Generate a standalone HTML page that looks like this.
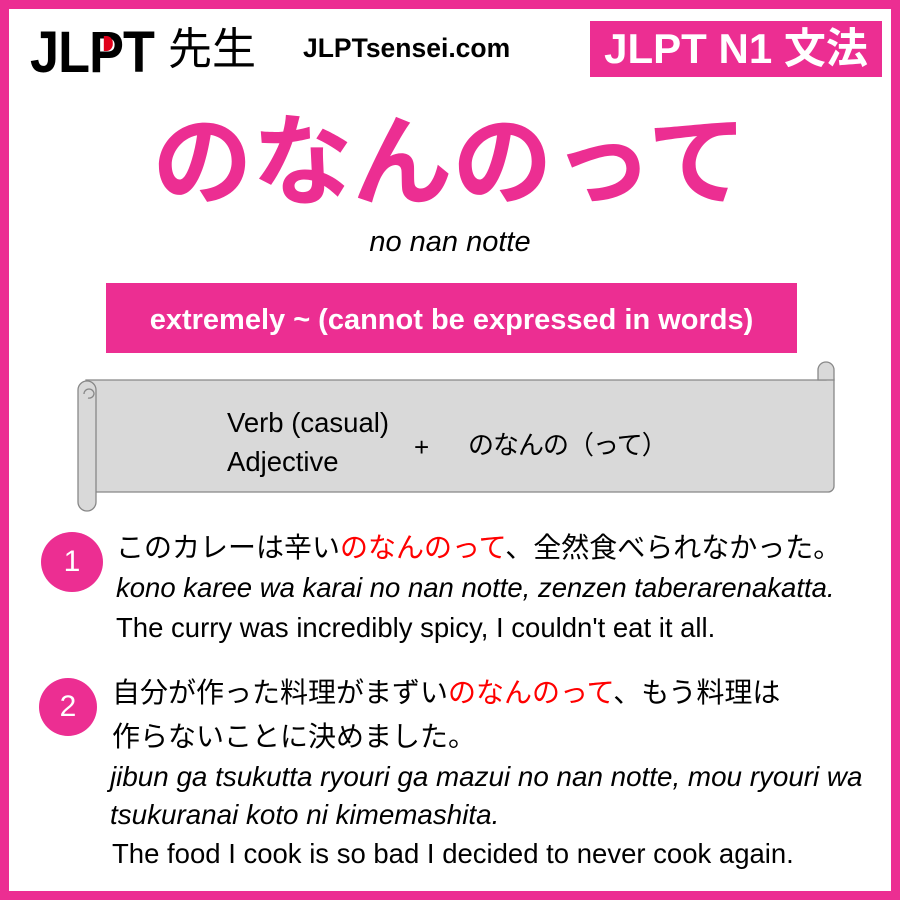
<!DOCTYPE html>
<html><head><meta charset="utf-8"><style>
*{margin:0;padding:0}
body{width:900px;height:900px;background:#ec2e92;position:relative;overflow:hidden;font-family:"Liberation Sans","Noto Sans CJK JP",sans-serif}
.in{position:absolute;left:9px;top:9px;width:882px;height:882px;background:#fff}
.a{position:absolute;white-space:nowrap}
.jp{font-family:"Liberation Sans","Noto Sans CJK JP",sans-serif}
.c{position:absolute;border-radius:50%;background:#ec2e92;color:#fff;text-align:center;font-size:30px}
.r{color:#f00}
</style></head><body>
<div class="in"></div>
<div class="a" style="left:30px;top:22px;font-size:58px;font-weight:bold;letter-spacing:-1px;line-height:62px;transform:scaleX(0.9);transform-origin:left">JL<span style="position:relative">P<span style="position:absolute;left:16px;top:16px;width:10px;height:15px;background:#e0001a;border-radius:0 7px 7px 0"></span></span>T</div>
<div class="a jp" style="left:168px;top:24px;font-size:44px;line-height:52px">先生</div>
<div class="a" style="left:303px;top:33px;font-size:26.5px;font-weight:bold;line-height:30px">JLPTsensei.com</div>
<div class="a jp" style="left:590px;top:21px;width:292px;height:56px;background:#ec2e92;color:#fff;font-size:42px;font-weight:bold;line-height:56px;text-align:center">JLPT N1 文法</div>
<div class="a jp" style="left:0;width:900px;top:105px;text-align:center;color:#ec2e92;font-size:100px;font-weight:bold;line-height:116px">のなんのって</div>
<div class="a" style="left:0;width:900px;top:226px;text-align:center;font-size:29px;font-style:italic;line-height:32px">no nan notte</div>
<div class="a" style="left:106px;top:283px;width:691px;height:70px;background:#ec2e92;color:#fff;font-size:29px;font-weight:bold;line-height:74px;text-align:center">extremely ~ (cannot be expressed in words)</div>
<svg class="a" style="left:0;top:0" width="900" height="900">
<path d="M86 380 H826 V372 a8 8 0 0 1 8 8 V486 a6 6 0 0 1 -6 6 H95 Z" fill="#d9d9d9" stroke="#888" stroke-width="1.3"/>
<path d="M818 380 V370 a8 8 0 0 1 16 0 V380 Z" fill="#d9d9d9" stroke="#888" stroke-width="1.3"/>
<path d="M78 390 a9 9 0 0 1 18 0 V502 a9 9 0 0 1 -18 0 Z" fill="#d9d9d9" stroke="#888" stroke-width="1.3"/>
<path d="M84 394 a5 5 0 0 1 10 0 a5 5 0 0 1 -6 4" fill="none" stroke="#888" stroke-width="1.3"/>
</svg>
<div class="a" style="left:227px;top:403px;font-size:27.5px;line-height:39px">Verb (casual)<br>Adjective</div>
<div class="a" style="left:414px;top:432px;font-size:26px;line-height:30px">+</div>
<div class="a jp" style="left:468px;top:428px;font-size:26px;line-height:34px;letter-spacing:-1px">のなんの（って）</div>
<div class="c" style="left:41px;top:532px;width:62px;height:60px;line-height:60px">1</div>
<div class="c" style="left:39px;top:678px;width:58px;height:58px;line-height:58px">2</div>
<div class="a jp" style="left:116px;top:529px;font-size:28px;line-height:38px">このカレーは辛い<span class="r">のなんのって</span>、全然食べられなかった。</div>
<div class="a" style="left:116px;top:572px;font-size:27.5px;font-style:italic;line-height:32px">kono karee wa karai no nan notte, zenzen taberarenakatta.</div>
<div class="a" style="left:116px;top:612px;font-size:27.5px;line-height:32px">The curry was incredibly spicy, I couldn't eat it all.</div>
<div class="a jp" style="left:112px;top:671px;font-size:28px;line-height:44px">自分が作った料理がまずい<span class="r">のなんのって</span>、もう料理は<br>作らないことに決めました。</div>
<div class="a" style="left:110px;top:758px;font-size:27.8px;font-style:italic;line-height:38px">jibun ga tsukutta ryouri ga mazui no nan notte, mou ryouri wa<br>tsukuranai koto ni kimemashita.</div>
<div class="a" style="left:112px;top:838px;font-size:27.5px;line-height:32px">The food I cook is so bad I decided to never cook again.</div>
</body></html>
